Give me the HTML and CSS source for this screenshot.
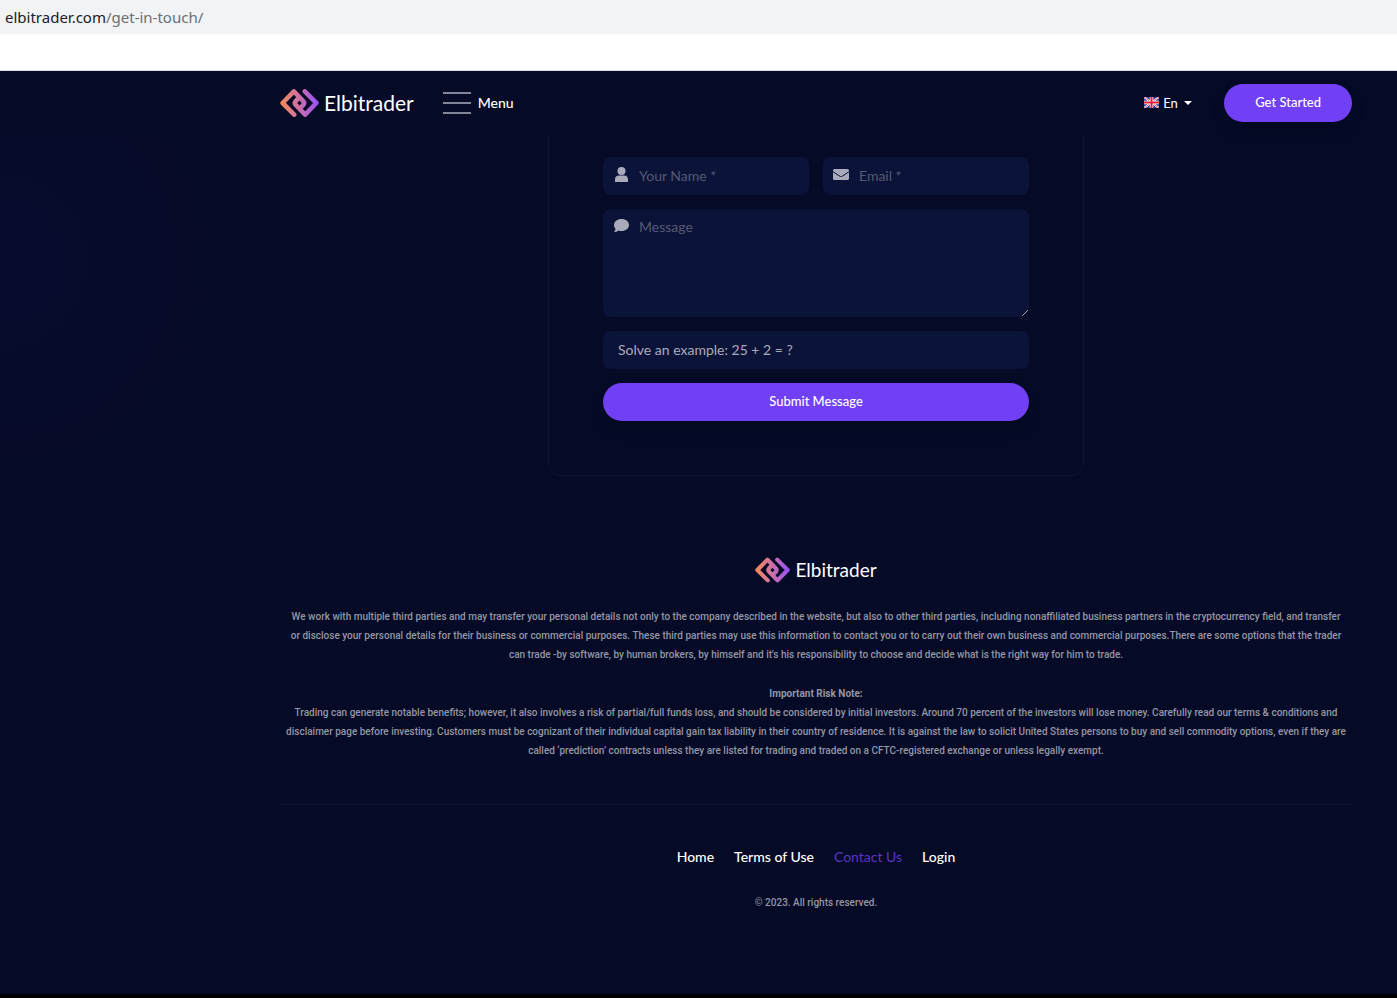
FILE: index.html
```html
<!DOCTYPE html>
<html lang="en">
<head>
  <meta charset="UTF-8">
  <meta name="viewport" content="width=device-width, initial-scale=1.0">
  <title>Get in touch - Elbitrader</title>
  <link rel="stylesheet" href="styles.css">
</head>
<body>

  <!-- Shared icons -->
  <svg class="sprite" aria-hidden="true">
    <defs>
      <linearGradient id="brand" x1="0" y1="0" x2="118" y2="0" gradientUnits="userSpaceOnUse">
        <stop offset="0" stop-color="#f68b52"/>
        <stop offset="0.5" stop-color="#cc6fa8"/>
        <stop offset="1" stop-color="#9350fa"/>
      </linearGradient>
      <symbol id="logo-mark" viewBox="0 0 118 84">
        <g fill="none" stroke="url(#brand)" stroke-width="14" stroke-linecap="round" stroke-linejoin="round">
          <path d="M43 77 L8 42 L42 7 L71 37 Q75 42 71 47 L61 58"/>
          <path d="M75 7 L110 42 L76 77 L47 47 Q43 42 47 37 L57 26"/>
        </g>
      </symbol>
    </defs>
  </svg>

  <div class="address-bar">elbitrader.com<span>/get-in-touch/</span></div>
  <div class="toolbar"></div>

  <div class="site">
    <header class="header">
      <a class="logo" href="#">
        <svg class="logo-mark" aria-hidden="true"><use href="#logo-mark"/></svg>
        Elbitrader
      </a>
      <button type="button" class="menu-button">
        <span class="menu-lines"><i></i><i></i><i></i></span>
        Menu
      </button>
      <div class="language">
        <svg class="flag" viewBox="0 0 15 11" aria-hidden="true">
          <rect width="15" height="11" fill="#2b3a9c"/>
          <path d="M0 0 L15 11 M15 0 L0 11" stroke="#fff" stroke-width="2"/>
          <path d="M0 0 L15 11 M15 0 L0 11" stroke="#d8304a" stroke-width="0.8"/>
          <path d="M7.5 0 V11 M0 5.5 H15" stroke="#fff" stroke-width="3.4"/>
          <path d="M7.5 0 V11 M0 5.5 H15" stroke="#e0203a" stroke-width="2"/>
        </svg>
        <select id="language" aria-label="Language">
          <option>En</option>
        </select>
        <svg class="caret" viewBox="0 0 8 4" aria-hidden="true"><path d="M0 0 H8 L4 4 Z" fill="#fff"/></svg>
      </div>
      <button type="button" class="btn btn-start">Get Started</button>
    </header>

    <main class="content">
      <form class="contact-form" id="contactForm">
        <div class="form-row">
          <div class="field">
            <label for="name" aria-label="Your Name">
              <svg viewBox="0 0 13 15" width="13" height="15" aria-hidden="true">
                <circle cx="6.5" cy="4" r="4"/>
                <path d="M0 15 V12.5 C0 10 1.5 8.5 4 8.5 H9 C11.5 8.5 13 10 13 12.5 V15 Z"/>
              </svg>
            </label>
            <input type="text" id="name" name="name" placeholder="Your Name *" required>
          </div>
          <div class="field">
            <label for="email" aria-label="Email">
              <svg viewBox="0 0 16 11" width="16" height="15" aria-hidden="true">
                <path d="M1.5 0 H14.5 Q16 0 16 1.5 V2.2 L9.5 6.5 Q8 7.5 6.5 6.5 L0 2.2 V1.5 Q0 0 1.5 0 Z"/>
                <path d="M0 3.2 L6 7.2 Q8 8.5 10 7.2 L16 3.2 V9.5 Q16 11 14.5 11 H1.5 Q0 11 0 9.5 Z"/>
              </svg>
            </label>
            <input type="email" id="email" name="email" placeholder="Email *" required>
          </div>
        </div>
        <div class="field field-message">
          <label for="message" aria-label="Message">
            <svg viewBox="0 0 15 13" width="15" height="13" aria-hidden="true">
              <path d="M7.5 0 C11.7 0 15 2.6 15 6 C15 9.4 11.7 12 7.5 12 C6.3 12 5.2 11.8 4.3 11.4 C3.2 12.3 1.8 13 0 13 C0.9 12 1.4 11 1.5 9.7 C0.5 8.7 0 7.4 0 6 C0 2.6 3.3 0 7.5 0 Z"/>
            </svg>
          </label>
          <textarea id="message" name="message" placeholder="Message"></textarea>
        </div>
        <div class="field field-captcha">
          <input type="text" id="captcha" name="captcha" aria-label="Solve an example" placeholder="Solve an example: 25 + 2 = ?">
        </div>
        <button type="submit" class="btn">Submit Message</button>
      </form>
    </main>

    <footer class="footer">
      <a class="logo logo-small" href="#">
        <svg class="logo-mark" aria-hidden="true"><use href="#logo-mark"/></svg>
        Elbitrader
      </a>
      <p>We work with multiple third parties and may transfer your personal details not only to the company described in the website, but also to other third parties, including nonaffiliated business partners in the cryptocurrency field, and transfer<br>
      or disclose your personal details for their business or commercial purposes. These third parties may use this information to contact you or to carry out their own business and commercial purposes.There are some options that the trader<br>
      can trade -by software, by human brokers, by himself and it's his responsibility to choose and decide what is the right way for him to trade.</p>
      <p><strong>Important Risk Note:</strong><br>
      Trading can generate notable benefits; however, it also involves a risk of partial/full funds loss, and should be considered by initial investors. Around 70 percent of the investors will lose money. Carefully read our terms &amp; conditions and<br>
      disclaimer page before investing. Customers must be cognizant of their individual capital gain tax liability in their country of residence. It is against the law to solicit United States persons to buy and sell commodity options, even if they are<br>
      called ‘prediction’ contracts unless they are listed for trading and traded on a CFTC-registered exchange or unless legally exempt.</p>
      <nav class="footer-nav">
        <a href="#">Home</a>
        <a href="#">Terms of Use</a>
        <a href="#" class="active">Contact Us</a>
        <a href="#">Login</a>
      </nav>
      <div class="copyright">© 2023. All rights reserved.</div>
    </footer>
  </div>

</body>
</html>
```

FILE: styles.css
```css
* {
  box-sizing: border-box;
}

body {
  margin: 0;
  min-height: 100vh;
  display: flex;
  flex-direction: column;
  font-family: Lato, sans-serif;
  font-size: 14px;
  color: #fff;
  background-color: #050a26;
}

a {
  color: inherit;
  text-decoration: none;
}

button,
input,
select,
textarea {
  font: inherit;
  color: inherit;
}

button {
  border: none;
  cursor: pointer;
}

.sprite {
  position: absolute;
  width: 0;
  height: 0;
}

.address-bar {
  height: 34px;
  padding-left: 5px;
  line-height: 34px;
  font-family: "Noto Sans", sans-serif;
  font-size: 15px;
  color: #202124;
  background-color: #f1f3f4;
}

.address-bar span {
  color: #6b6f73;
}

.toolbar {
  height: 37px;
  background-color: #fff;
  border-bottom: 1px solid #dadce0;
}

.site {
  flex: 1;
  border-bottom: 4px solid #000;
  background: radial-gradient(circle at 0 190px, #070b2e 0, #050a26 240px);
}

.header {
  display: flex;
  align-items: center;
  height: 65px;
  padding: 0 45px 2px 280px;
  background-color: #050a26;
}

.logo {
  display: inline-flex;
  align-items: center;
  gap: 5px;
  font-size: 21px;
  line-height: 28px;
}

.logo-mark {
  width: 39px;
  height: 28px;
}

.logo-small {
  font-size: 19px;
  line-height: 26px;
}

.logo-small .logo-mark {
  width: 35px;
  height: 26px;
}

.menu-button {
  display: flex;
  align-items: center;
  gap: 7px;
  margin-left: 29px;
  padding: 0;
  font-weight: 500;
  background: none;
}

.menu-lines {
  display: grid;
  gap: 8px;
}

.menu-lines i {
  width: 28px;
  height: 2px;
  background-color: #82859a;
}

.language {
  display: flex;
  align-items: center;
  margin-left: auto;
  margin-right: 32px;
  font-size: 13px;
}

.language select {
  appearance: none;
  margin: 0 6px 0 4px;
  padding: 0;
  border: none;
  background: none;
}

.language option {
  background-color: #0b1339;
}

.flag {
  width: 15px;
  height: 11px;
}

.caret {
  width: 8px;
  height: 4px;
}

.btn {
  height: 38px;
  padding: 0 31px 2px;
  border-radius: 19px;
  font-size: 13px;
  font-weight: 500;
  color: #fff;
  background-color: #7140f4;
  box-shadow: 0 8px 16px rgba(0, 0, 0, 0.1);
}

.content {
  padding: 0 45px 0 280px;
}

.contact-form {
  display: flex;
  flex-direction: column;
  gap: 14px;
  max-width: 536px;
  margin: 0 auto;
  padding: 21px 54px 54px;
  border: 1px solid #0d1238;
  border-top: none;
  border-radius: 0 0 12px 12px;
}

.form-row {
  display: flex;
  gap: 14px;
}

.field {
  flex: 1;
  display: flex;
  min-width: 0;
  height: 38px;
  border-radius: 8px;
  background-color: #0b1339;
  overflow: hidden;
}

.field label {
  display: flex;
  justify-content: center;
  width: 36px;
  padding-top: 10px;
}

.field label svg {
  fill: #a9abba;
}

.field input,
.field textarea {
  flex: 1;
  min-width: 0;
  padding: 0 0 2px;
  border: none;
  outline: none;
  background: none;
}

.field ::placeholder {
  color: #545a74;
}

.field-message {
  flex: none;
  height: 108px;
}

.field-message textarea {
  padding-top: 9px;
  line-height: 18px;
}

.field-captcha {
  flex: none;
  padding-left: 15px;
}

.field-captcha ::placeholder {
  color: #a9abba;
}

.footer {
  padding: 81px 45px 80px 280px;
  text-align: center;
}

.footer p {
  margin: 0 0 20px;
  font-family: Roboto, sans-serif;
  font-size: 10px;
  font-weight: 500;
  line-height: 19px;
  color: #9496a4;
}

.footer .logo-small {
  margin-bottom: 24px;
}

.footer-nav {
  display: flex;
  justify-content: center;
  gap: 20px;
  margin-top: 44px;
  padding-top: 42px;
  border-top: 1px solid #0d1238;
  font-weight: 500;
  line-height: 20px;
}

.footer-nav .active {
  font-weight: 400;
  color: #5c35c9;
}

.copyright {
  margin-top: 26px;
  font-family: Roboto, sans-serif;
  font-size: 10px;
  font-weight: 500;
  line-height: 19px;
  color: #9496a4;
}
```
